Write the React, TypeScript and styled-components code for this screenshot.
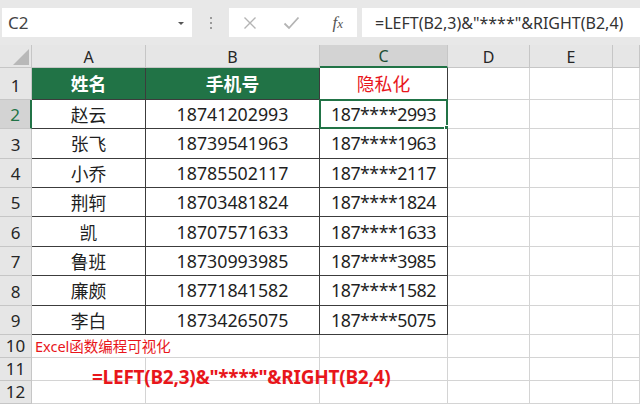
import React from "react";
import styled, { createGlobalStyle } from "styled-components";

const GREEN = "#217346";
const RED = "#e8161b";
const DARK = "#3c3c3c";
const GRID = "#d4d4d4";
const FONT = `"Noto Sans", "Noto Sans CJK SC", sans-serif`;

const GlobalStyle = createGlobalStyle`
  html, body {
    margin: 0;
    padding: 0;
    background: #ffffff;
    font-family: ${FONT};
  }
  * { box-sizing: border-box; }
`;

interface Person {
  name: string;
  phone: string;
}

const people: Person[] = [
  { name: "赵云", phone: "18741202993" },
  { name: "张飞", phone: "18739541963" },
  { name: "小乔", phone: "18785502117" },
  { name: "荆轲", phone: "18703481824" },
  { name: "凯", phone: "18707571633" },
  { name: "鲁班", phone: "18730993985" },
  { name: "廉颇", phone: "18771841582" },
  { name: "李白", phone: "18734265075" },
];

const mask = (phone: string) => phone.slice(0, 3) + "****" + phone.slice(-4);

const columns = ["A", "B", "C", "D", "E", ""];

const App = () => {
  return (
    <Page>
      <GlobalStyle />
      <TopBar>
        <NameBox>
          <span>C2</span>
          <Caret />
        </NameBox>
        <Grip>
          <i />
          <i />
          <i />
        </Grip>
        <FxTools>
          <svg width="14" height="14" viewBox="0 0 14 14">
            <path d="M1.5 1.5 L12.5 12.5 M12.5 1.5 L1.5 12.5" stroke="#b4b4b4" strokeWidth="1.4" fill="none" />
          </svg>
          <svg width="17" height="14" viewBox="0 0 17 14">
            <path d="M1.5 7.5 L6 12 L15.5 1.5" stroke="#b4b4b4" strokeWidth="1.8" fill="none" />
          </svg>
          <FxLabel>
            f<sub>x</sub>
          </FxLabel>
        </FxTools>
        <FormulaBox>=LEFT(B2,3)&amp;"****"&amp;RIGHT(B2,4)</FormulaBox>
      </TopBar>

      <Sheet>
        <Corner>
          <svg width="16" height="16" viewBox="0 0 16 16">
            <path d="M16 0 L16 16 L0 16 Z" fill="#b8b8b8" />
          </svg>
        </Corner>
        {columns.map((c) => (
          <ColHead key={c || "F"} $active={c === "C"}>
            {c}
          </ColHead>
        ))}

        <RowHead>1</RowHead>
        <Cell $head $table>姓名</Cell>
        <Cell $head $table>手机号</Cell>
        <Cell $table $red>隐私化</Cell>
        <Cell />
        <Cell />
        <Cell />

        {people.map((p, i) => (
          <React.Fragment key={p.phone}>
            <RowHead $active={i === 0}>{i + 2}</RowHead>
            <Cell $table>{p.name}</Cell>
            <Cell $table>{p.phone}</Cell>
            <Cell $table $tight>
              {mask(p.phone)}
              {i === 0 && (
                <Selection>
                  <Handle />
                </Selection>
              )}
            </Cell>
            <Cell />
            <Cell />
            <Cell />
          </React.Fragment>
        ))}

        <RowHead $small>10</RowHead>
        <Cell $note $span={2}>Excel函数编程可视化</Cell>
        <Cell />
        <Cell />
        <Cell />
        <Cell />

        <RowHead $small>11</RowHead>
        <Cell />
        <Cell />
        <Cell />
        <Cell />
        <Cell />
        <Cell />

        <RowHead $small>12</RowHead>
        <Cell />
        <Cell />
        <Cell />
        <Cell />
        <Cell />
        <Cell />

        <TextBox>=LEFT(B2,3)&amp;"****"&amp;RIGHT(B2,4)</TextBox>
      </Sheet>
    </Page>
  );
};

const Page = styled.div`
  width: 640px;
  height: 404px;
  overflow: hidden;
  display: flex;
  flex-direction: column;
  background: #e8e8e8;
`;

const TopBar = styled.div`
  height: 47px;
  display: flex;
  align-items: flex-start;
  padding: 8px 0 0 2px;
  background: #e8e8e8;
`;

const NameBox = styled.div`
  width: 190px;
  height: 29px;
  background: #ffffff;
  display: flex;
  align-items: center;
  justify-content: space-between;
  padding: 0 8px 0 6px;
  font-size: 17px;
  color: #444444;
`;

const Caret = styled.div`
  width: 0;
  height: 0;
  border-left: 3px solid transparent;
  border-right: 3px solid transparent;
  border-top: 3px solid #555555;
  margin-top: 1px;
`;

const Grip = styled.div`
  width: 37px;
  height: 29px;
  display: flex;
  flex-direction: column;
  align-items: center;
  justify-content: center;
  gap: 3px;

  i {
    display: block;
    width: 2px;
    height: 2px;
    background: #9a9a9a;
  }
`;

const FxTools = styled.div`
  width: 128px;
  height: 29px;
  background: #ffffff;
  display: flex;
  align-items: center;
  padding: 0 14px 0 14px;

  svg:first-child {
    margin-right: 26px;
  }
`;

const FxLabel = styled.span`
  margin-left: auto;
  font-family: "Liberation Serif", "DejaVu Serif", serif;
  font-style: italic;
  font-size: 17px;
  color: #555555;

  sub {
    font-size: 13px;
    vertical-align: baseline;
  }
`;

const FormulaBox = styled.div`
  flex: 1;
  margin-left: 5px;
  height: 29px;
  background: #ffffff;
  display: flex;
  align-items: center;
  padding-left: 13px;
  font-size: 16px;
  color: #333333;
  white-space: nowrap;
`;

const Sheet = styled.div`
  position: relative;
  flex: 1;
  display: grid;
  grid-template-columns: 32px 114px 174px 128px 82px 83px 1fr;
  grid-template-rows: 23px 32px repeat(8, 29.4px) 22.6px 23.4px 23px;
  background: #ffffff;
`;

const Corner = styled.div`
  background: #e6e6e6;
  border-right: 1px solid #c6c6c6;
  border-bottom: 1px solid #c6c6c6;
  display: flex;
  align-items: flex-end;
  justify-content: flex-end;
  padding: 0 2px 2px 0;
`;

const ColHead = styled.div<{ $active?: boolean }>`
  background: ${(p) => (p.$active ? "#d3d3d3" : "#e6e6e6")};
  border-right: 1px solid #c6c6c6;
  border-bottom: ${(p) => (p.$active ? `2px solid ${GREEN}` : "1px solid #c6c6c6")};
  display: flex;
  align-items: center;
  justify-content: center;
  font-size: 16px;
  color: ${(p) => (p.$active ? "#1e4e33" : "#262626")};
  padding-top: 2px;
`;

const RowHead = styled.div<{ $active?: boolean; $small?: boolean }>`
  background: ${(p) => (p.$active ? "#d3d3d3" : "#e6e6e6")};
  border-right: ${(p) => (p.$active ? `2px solid ${GREEN}` : "1px solid #c6c6c6")};
  border-bottom: 1px solid #c6c6c6;
  display: flex;
  align-items: flex-end;
  justify-content: center;
  padding-bottom: ${(p) => (p.$small ? "0" : "2px")};
  font-size: 17px;
  line-height: 22px;
  color: ${(p) => (p.$active ? GREEN : "#262626")};
`;

const Cell = styled.div<{
  $table?: boolean;
  $head?: boolean;
  $red?: boolean;
  $note?: boolean;
  $tight?: boolean;
  $span?: number;
}>`
  position: relative;
  grid-column: span ${(p) => p.$span || 1};
  background: ${(p) => (p.$head ? GREEN : "#ffffff")};
  border-right: 1px solid ${(p) => (p.$table ? DARK : GRID)};
  border-bottom: 1px solid ${(p) => (p.$table ? DARK : GRID)};
  display: flex;
  align-items: center;
  justify-content: ${(p) => (p.$note ? "flex-start" : "center")};
  padding-left: ${(p) => (p.$note ? "3px" : "0")};
  font-size: ${(p) => (p.$note ? "14.5px" : "17.8px")};
  font-weight: ${(p) => (p.$head ? 700 : 400)};
  letter-spacing: ${(p) => (p.$tight ? "-0.5px" : "0")};
  color: ${(p) => (p.$head ? "#ffffff" : p.$red || p.$note ? RED : "#1f1f1f")};
  white-space: nowrap;
`;

const Selection = styled.div`
  position: absolute;
  left: -1px;
  top: -1px;
  right: -1px;
  bottom: -1px;
  border: 2px solid ${GREEN};
  pointer-events: none;
`;

const Handle = styled.div`
  position: absolute;
  right: -4px;
  bottom: -4px;
  width: 6px;
  height: 6px;
  background: ${GREEN};
  border: 1px solid #ffffff;
`;

const TextBox = styled.div`
  position: absolute;
  left: 92px;
  top: 319px;
  font-size: 19px;
  font-weight: 700;
  color: ${RED};
  white-space: nowrap;
  letter-spacing: -0.25px;
`;

export default App;
